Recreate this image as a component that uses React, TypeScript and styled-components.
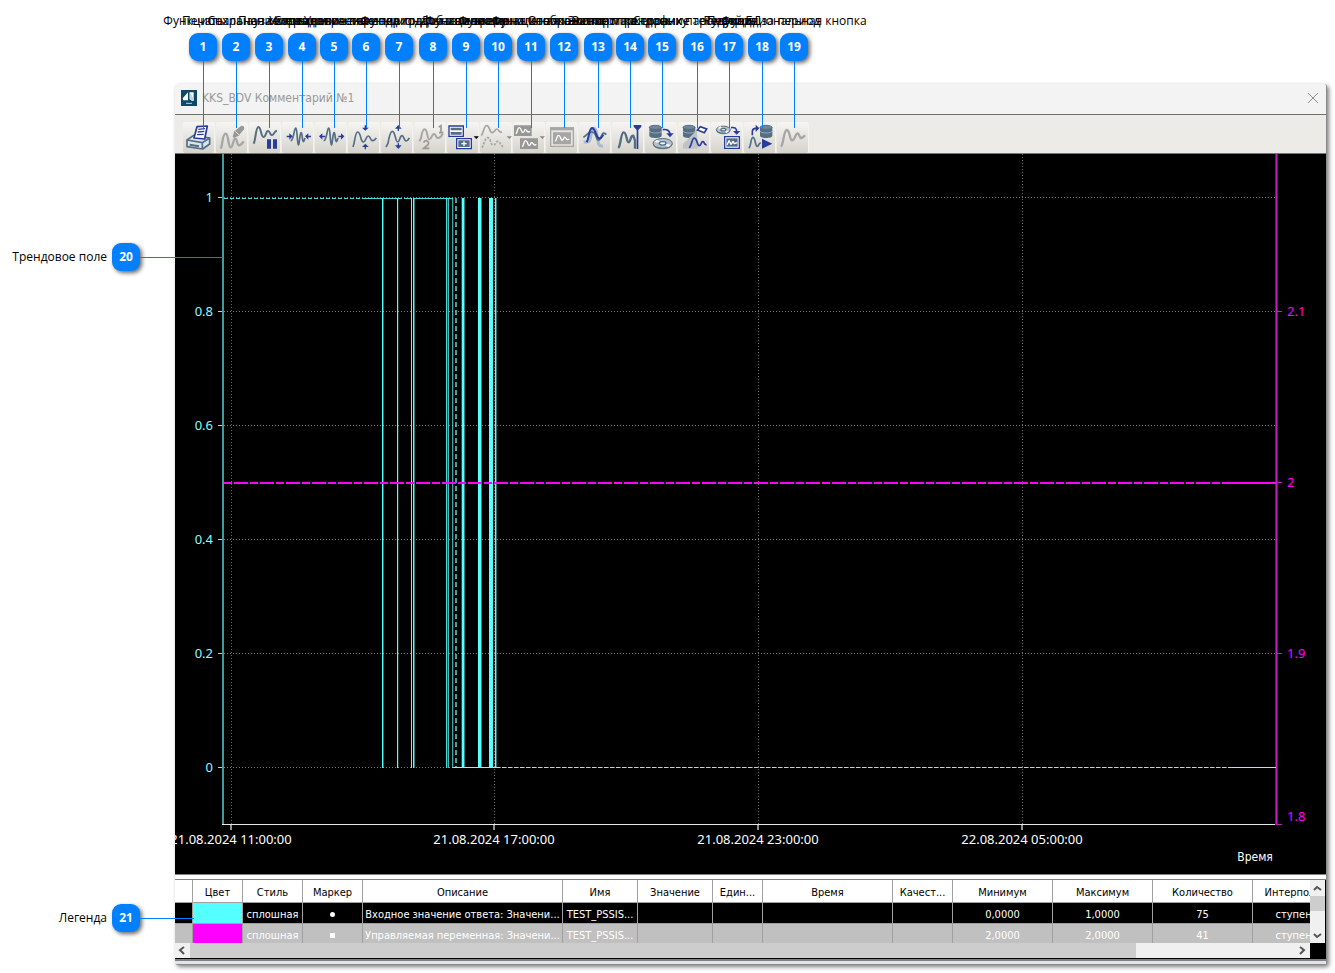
import React from "react";
import styled, { createGlobalStyle } from "styled-components";

const UI = `"DejaVu Sans Condensed", "DejaVu Sans", sans-serif`;
const SLATE = "#546e84";
const BLUE = "#283c9b";
const GRAY = "#a6a6a4";
const ACCENT = "#0080ff";

const GlobalStyle = createGlobalStyle`
  * { box-sizing: border-box; }
  body { margin: 0; background: #fff; }
`;

const Page = styled.main`
  position: relative;
  padding: 84px 8px 8px 175px;
  overflow: hidden;
`;

const Window = styled.section`
  display: flex;
  flex-direction: column;
  border-right: 1px solid #8a8a8a;
  border-bottom: 1px solid #8a8a8a;
  border-radius: 3px;
  background: #fff;
  box-shadow: 2px 2px 4px rgba(0, 0, 0, 0.5);
`;

const TitleBar = styled.header`
  display: flex;
  align-items: center;
  gap: 5px;
  height: 31px;
  padding: 0 7px 2px 6px;
  border-bottom: 1px solid #6e706c;
  border-radius: 3px 3px 0 0;
  background: #f3f3f3;
  font: 12px/16px ${UI};
  color: #999;
`;

const Title = styled.h1`
  flex: 1;
  margin: 0;
  font: inherit;
`;

const CloseButton = styled.button`
  display: grid;
  place-items: center;
  width: 12px;
  height: 12px;
  padding: 0;
  border: 0;
  background: none;
`;

const Toolbar = styled.div`
  display: flex;
  gap: 1px;
  height: 39px;
  padding: 7px 8px 0;
  border-bottom: 1px solid #777;
  background: #ecebe7;
`;

const ToolButton = styled.button`
  width: 32px;
  height: 31px;
  padding: 0;
  border: 0;
  border-right: 1px solid #f4f3f0;
  border-radius: 2px;
  background: linear-gradient(#f6f5f2, #e6e4df 50%, #d6d3cb);
  svg { display: block; }
`;

const Chart = styled.svg`
  display: block;
  width: 100%;
  height: auto;
  background: #000;
  font: 13px "Noto Sans", sans-serif;
`;

const AxisTitle = styled.text`
  font: 12px ${UI};
`;

const Legend = styled.div`
  margin-top: 4px;
  padding-bottom: 1px;
  border-top: 1px solid #808080;
  border-bottom: 2px solid #808080;
  background: #000;
`;

const LegendBody = styled.div`
  display: flex;
  height: 63px;
  padding-right: 1px;
`;

const TableView = styled.div`
  flex: 1;
  min-width: 0;
  overflow: hidden;
`;

const Table = styled.table`
  width: 1178px;
  min-width: 100%;
  table-layout: fixed;
  border-collapse: separate;
  border-spacing: 0;
  font: 11px/14px ${UI};
`;

const Col = styled.col<{ $w: number }>`
  width: ${(p) => p.$w}px;
`;

const Head = styled.th`
  height: 23px;
  padding: 3px 2px 0;
  border-right: 1px solid #a0a0a0;
  border-bottom: 1px solid #a0a0a0;
  overflow: hidden;
  background: #fff;
  font-weight: 400;
  color: #000;
  white-space: nowrap;
`;

const Row = styled.tr<{ $muted?: boolean }>`
  background: ${(p) => (p.$muted ? "#c0c0c0" : "#000")};
  color: #fff;
`;

const Cell = styled.td<{ $fill?: string }>`
  height: 21px;
  padding: 3px 2px 0;
  border-right: 1px solid #a0a0a0;
  border-bottom: 1px solid #a0a0a0;
  overflow: hidden;
  background: ${(p) => p.$fill ?? "transparent"};
  text-align: center;
  white-space: nowrap;
`;

const Marker = styled.span<{ $round?: boolean }>`
  display: inline-block;
  width: 5px;
  height: 5px;
  vertical-align: middle;
  border-radius: ${(p) => (p.$round ? "3px" : "0")};
  background: #fff;
`;

const VScroll = styled.div`
  display: flex;
  flex-direction: column;
  width: 15px;
  background: #f0f0f0;
`;

const HScroll = styled.div`
  display: flex;
  height: 15px;
  margin-right: 16px;
  background: #f0f0f0;
`;

const ScrollButton = styled.button`
  display: grid;
  place-items: center;
  width: 15px;
  height: 16px;
  padding: 0;
  border: 0;
  background: #f0f0f0;
`;

const HScrollButton = styled(ScrollButton)`
  height: 15px;
`;

const VThumb = styled.div`
  height: 15px;
  margin-bottom: auto;
  background: #cdcdcd;
`;

const HThumb = styled.div`
  flex: 947;
  background: #cdcdcd;
`;

const HTrack = styled.div`
  flex: 159;
`;

const StatusStrip = styled.div`
  height: 3px;
  background: #e1e4e9;
`;

const TopCallout = styled.div<{ $x: number }>`
  position: absolute;
  left: ${(p) => p.$x}px;
  top: 13px;
  display: flex;
  flex-direction: column;
  align-items: center;
  width: 0;
  font: 12px/16px "Open Sans", sans-serif;
  color: #000;
  white-space: nowrap;
`;

const SideCallout = styled.div<{ $y: number }>`
  position: absolute;
  left: 0;
  top: ${(p) => p.$y}px;
  display: flex;
  align-items: center;
  font: 12px/16px "Open Sans", sans-serif;
  color: #000;
  white-space: nowrap;
`;

const SideLabel = styled.span`
  width: 112px;
  padding-right: 5px;
  text-align: right;
`;

const Badge = styled.b`
  flex: none;
  display: grid;
  place-items: center;
  width: 28px;
  height: 28px;
  border-radius: 9px;
  background: ${ACCENT};
  box-shadow: 2px 2px 4px rgba(0, 0, 0, 0.6);
  font: 700 12px/16px "Open Sans", sans-serif;
  color: #fff;
`;

const TopBadge = styled(Badge)`
  margin-top: 4px;
`;

/* The one-pixel margins keep the centred hairlines on whole pixels. */
const VLine = styled.i`
  width: 1px;
  height: 67px;
  margin-left: 1px;
  background: ${ACCENT};
`;

const HLine = styled.i<{ $w: number }>`
  width: ${(p) => p.$w}px;
  height: 1px;
  margin-top: 1px;
  background: ${ACCENT};
`;

/* Toolbar icons are drawn on a 96 x 93 grid, three units to a pixel. */
const Wave = ({ d, c = SLATE, w = 6, dash }: { d: string; c?: string; w?: number; dash?: string }) => (
  <path d={d} fill="none" stroke={c} strokeWidth={w} strokeLinejoin="round" strokeDasharray={dash} />
);
const Fill = ({ d, c = BLUE }: { d: string; c?: string }) => <path d={d} fill={c} />;

const TREND = "M15 75L21 64Q27 28 34 28C43 28 43 60 50 60C57 60 56 41 63 41C69 41 69 57 75 57Q80 57 85 48";
const BURST = "M26 56C32 56 33 44 36 34C40 12 43 13 45 36C48 78 50 76 53 50C56 26 59 26 61 48C64 66 66 58 69 48";
const CARET = "M80 43H96L88 51Z";
const MINI = "M0 19C5 14 4 0 10 1C17 2 15 16 21 15C27 14 24 5 29 7C34 8 32 18 42 12";
const disc = (x: number, y: number, rx: number) => (
  <g transform={`translate(${x} ${y})`}>
    <ellipse cy="3" rx={rx} ry={rx * 0.52} fill="#6c8190" />
    <ellipse rx={rx} ry={rx * 0.5} fill="#b3c1ca" stroke={SLATE} strokeWidth="3" />
    <path d={`M${-rx + 4} -4L0 0L${-rx + 12} -11Z M${rx - 4} 4L0 0L${rx - 12} 11Z`} fill="#f4f7f8" />
    <ellipse rx={rx * 0.35} ry={rx * 0.18} fill="#f4f4f2" stroke={SLATE} strokeWidth="4" />
  </g>
);
const cylinder = (x: number, y: number) => (
  <g transform={`translate(${x} ${y})`}>
    <path d="M0 6V31C0 40 37 40 37 31V6Z" fill={SLATE} />
    <ellipse cx="18" cy="6" rx="18" ry="6" fill="#71889a" stroke={SLATE} strokeWidth="3" />
    <path d="M0 17C2 25 35 25 37 17" fill="none" stroke="#b5c2cb" strokeWidth="2" />
  </g>
);

const ICONS: [string, React.ReactNode][] = [
  ["Печать", <>
    <path d="M12 54L32 40L80 48V66L59 81L12 74Z" fill="#dce4e9" stroke={SLATE} strokeWidth="5" strokeLinejoin="round" />
    <path d="M12 54L58 62L80 48M58 62V80" fill="none" stroke={SLATE} strokeWidth="5" />
    <path d="M42 14L73 12L65 51L33 48Z" fill="#fff" stroke={BLUE} strokeWidth="5" strokeLinejoin="round" />
    <path d="M46 22L66 20M44 30L64 28M42 38L62 37" stroke={BLUE} strokeWidth="4" />
    <path d="M20 68L48 73" stroke={SLATE} strokeWidth="6" />
  </>],
  ["Редактирование", <>
    <Wave c={GRAY} w={7} d="M14 80C20 70 19 35 29 35C38 35 36 76 44 76C52 76 51 50 58 50C64 50 62 70 69 70Q76 69 83 58" />
    <path d="M50 44L55 28L76 11Q87 12 84 22L68 41L54 48Z" fill="#989896" />
    <path d="M57 27L69 39" stroke="#ddd" strokeWidth="3" />
  </>],
  ["Пауза", <>
    <Wave d="M14 65C20 55 20 16 28 15C37 15 35 46 44 45C52 44 50 27 57 27C64 27 62 40 69 39C77 38 75 26 84 26" />
    <Fill d="M54 52H66V80H54ZM72 52H84V80H72Z" />
  </>],
  ["Сжать по времени", <>
    <Wave d={BURST} w={5} />
    <Fill d="M14 41H22V34L32 43L22 53V46H14ZM87 41H79V34L69 43L79 53V46H87Z" />
  </>],
  ["Растянуть по времени", <>
    <Wave d={BURST} w={5} />
    <Fill d="M30 41H22V34L12 43L22 53V46H30ZM70 41H78V34L88 43L78 53V46H70Z" />
  </>],
  ["Сжать по вертикали", <>
    <Wave w={5} d="M15 75C21 61 21 30 29 30C39 30 37 61 46 60C54 59 54 42 61 42C68 42 66 57 74 56Q79 56 85 48" />
    <Fill d="M50 10H54V17H62L52 26L42 17H50ZM50 82H54V75H62L52 65L42 75H50Z" />
  </>],
  ["Растянуть по вертикали", <>
    <Wave d={TREND} w={5} />
    <Fill d="M50 27H54V20H62L52 9L42 20H50ZM50 64H54V70H62L52 81L42 70H50Z" />
  </>],
  ["Первый и второй тренд", <>
    <Wave c={GRAY} d="M16 58L21 49Q25 22 32 22C41 22 39 53 46 52C54 51 53 36 60 36C67 36 65 50 73 48Q81 47 86 35" />
    <path d="M74 15L81 11V32M75 32H88M29 62Q31 55 38 56Q47 60 42 68L29 79H46" fill="none" stroke="#999" strokeWidth="5" />
  </>],
  ["Список параметров", <>
    <path d="M6 12H49V43H6ZM29 50H73V80H29Z" fill="#fff" stroke={BLUE} strokeWidth="4" />
    <Fill c={SLATE} d="M11 17H44V25H11ZM11 30H44V38H11ZM34 55H68V75H34Z" />
    <path d="M43 65H59M51 58V72" stroke="#fff" strokeWidth="4" />
    <Fill c="#000" d={CARET} />
  </>],
  ["Тренды", <>
    <Wave c={GRAY} w={5} d="M4 41C11 33 11 11 20 11C30 11 28 33 37 32C45 31 45 20 51 21C58 22 55 34 66 30" />
    <Wave c={GRAY} w={5} dash="7 4" d="M6 77C12 68 15 47 23 47C33 48 31 70 40 69C48 68 47 57 54 58C61 59 60 72 73 75" />
    <Fill c="#888" d={CARET} />
  </>],
  ["Области трендов", <>
    <Fill c="#979796" d="M3 10H56V42H3ZM21 49H75V81H21Z" />
    <g transform="translate(9 16)"><Wave c="#fff" w={4} d={MINI} /></g>
    <g transform="translate(28 55)"><Wave c="#fff" w={4} d={MINI} /></g>
    <Fill c="#888" d={CARET} />
  </>],
  ["Окно", <>
    <path d="M14 18H82V73H14Z" fill="#e5e4e1" stroke={GRAY} strokeWidth="4" />
    <Fill c={GRAY} d="M12 16H84V25H12ZM21 31H75V67H21Z" />
    <g transform="translate(28 39)"><Wave c="#fff" w={4} d={MINI} /></g>
  </>],
  ["Сравнение", <>
    <Wave c="#a9b9cf" w={9} d="M14 60C26 58 31 68 36 40C39 12 50 12 54 38C58 66 58 74 72 72" />
    <Wave c={SLATE} w={5} d="M13 46C22 42 26 30 38 30C50 30 50 44 55 52C62 60 66 44 70 36Q74 30 82 38" />
    <Wave c={BLUE} d="M23 61C30 49 30 19 39 18C49 18 50 43 58 48Q66 52 73 38" />
  </>],
  ["Линейка", <>
    <Wave w={7} d="M19 78C27 70 26 31 35 31C45 31 43 62 50 61C57 60 54 40 64 41L69 56V80" />
    <Fill d="M65 9H88V14L79 24V81H74V24L65 14Z" />
  </>],
  ["Архив", <>
    {cylinder(13, 10)}
    <path d="M53 23Q75 20 75 39" fill="none" stroke={BLUE} strokeWidth="5" />
    <Fill d="M64 34H86L75 46Z" />
    {disc(53, 64, 29)}
  </>],
  ["Очистить", <>
    {cylinder(15, 10)}
    <Fill c="#bfc3c8" d="M15 80V66L57 24L59 80Z" />
    <path d="M58 24L67 14L86 21L79 32Z" fill="#fff" stroke={BLUE} strokeWidth="5" />
    <Wave c={BLUE} w={5} d="M34 78C42 67 42 47 49 48C58 49 57 72 64 71C71 70 68 58 75 59C80 60 78 70 86 68" />
  </>],
  ["Показать архив", <>
    {disc(37, 23, 21)}
    <path d="M60 17Q77 14 77 29" fill="none" stroke={BLUE} strokeWidth="5" />
    <Fill d="M66 27H88L77 38Z" />
    <path d="M41 44H85V79H41Z" fill="#fff" stroke={BLUE} strokeWidth="4" />
    <Fill c={SLATE} d="M46 49H80V74H46Z" />
    <Wave c="#fff" w={4} d="M48 69L54 56L60 67L66 58L70 65L79 62" />
  </>],
  ["Воспроизвести", <>
    {cylinder(48, 10)}
    <Wave w={5} d="M15 79C22 70 20 46 27 46C35 47 33 74 40 73C46 72 43 62 51 63" />
    <path d="M25 40V29Q25 19 36 19" fill="none" stroke={BLUE} strokeWidth="5" />
    <Fill d="M35 8V30L46 19ZM54 50V80L85 65Z" />
  </>],
  ["Тренд", <Wave key="w" c={GRAY} w={7} d="M12 74C20 66 20 25 29 24C40 24 37 56 46 55C54 54 55 34 62 34C69 35 66 50 74 48Q78 47 84 40" />],
];

const FN = "Функциональная кнопка";
const CALLOUTS: [number, string][] = [
  [203, "Печать"],
  [236, FN],
  [269, "Сохранение трендов"],
  [302, "Пауза и продолжение"],
  [334, "Уменьшение периода"],
  [366, "Увеличение периода"],
  [399, "Сжатие и растяжение графика по времени"],
  [433, FN],
  [466, "Добавление тр."],
  [498, FN],
  [531, FN],
  [564, FN],
  [598, "Отображение маркеров"],
  [630, "Экспорт по графику"],
  [662, "Экспорт трендовых параметров"],
  [697, "Стирание текущей БД"],
  [729, "Период"],
  [762, "Редукция за период"],
  [794, FN],
];

const COLS = [18, 50, 60, 60, 200, 75, 75, 50, 130, 60, 100, 100, 100, 100];
const HEADS = ["", "Цвет", "Стиль", "Маркер", "Описание", "Имя", "Значение", "Един...", "Время", "Качест...", "Минимум", "Максимум", "Количество", "Интерполяция"];
const ROWS = [
  { color: "#55ffff", desc: "Входное значение ответа: Значени...", min: "0,0000", max: "1,0000", count: "75" },
  { color: "#ff00ff", desc: "Управляемая переменная: Значени...", min: "2,0000", max: "2,0000", count: "41" },
];

/* [x, width, opacity] of every vertical edge of the discrete signal. */
const EDGES: [number, number, number][] = [
  [207, 1, 1], [208, 1, 0.45], [222, 1, 1], [223, 1, 0.2], [236, 1, 1], [238, 1, 1], [239, 1, 0.5],
  [271, 1, 0.85], [272, 1, 0.3], [273, 1, 0.75], [277, 1, 0.65], [278, 1, 0.2], [286, 1, 0.3],
  [287, 2, 1], [289, 1, 0.5], [303, 3, 1], [306, 1, 0.5], [314, 4, 1], [320, 1, 1], [321, 1, 0.45],
];

const TrendChart = () => (
  <Chart viewBox="0 0 1151 721" role="img" aria-label="Трендовое поле">
    <g shapeRendering="crispEdges">
      {[43, 157, 271, 385, 499, 613].map((y) => (
        <path key={y} d={`M49 ${y}.5H1101`} stroke="#808080" strokeDasharray="1 2" />
      ))}
      {[56, 319, 583, 847].map((x) => (
        <g key={x}>
          <path d={`M${x}.5 0V670`} stroke="#686868" strokeDasharray="1 2" />
          <path d={`M${x} 671V676`} stroke="#909090" strokeWidth="2" />
        </g>
      ))}
      {[43, 157, 271, 385, 499, 613].map((y) => (
        <path key={y} d={`M43 ${y}.5H48`} stroke="#55ffff" />
      ))}
      <path d="M48 0V670" stroke="#3f9c9c" strokeWidth="2" />
      <path d="M47 670.5H1101" stroke="#e8e8e8" />
      <path d="M1101.5 0V671" stroke="#6e146e" strokeWidth="3" />
      <path d="M1101.5 0V671M1101 157.5H1107M1101 328.5H1107M1101 499.5H1107M1101 670.5H1107" stroke="#c020c0" />
      <path d="M49 44.5H189" stroke="#48d8d8" strokeDasharray="4 2" />
      <path d="M189 44.5H227M229 44.5H237M238 44.5H278" stroke="#48d8d8" />
      {EDGES.map(([x, w, o]) => (
        <rect key={x} x={x} y="44" width={w} height="570" fill="#55ffff" opacity={o} />
      ))}
      <path d="M281 44V613" stroke="#48d0d0" strokeWidth="2" strokeDasharray="5 3" opacity="0.8" />
      <path d="M278 613.5H321M1057 613.5H1101" stroke="#7ff" />
      <path d="M321 613.5H1057" stroke="#a8dede" strokeDasharray="4 2" />
      <path d="M49 329H1057" stroke="#f0f" strokeWidth="2" strokeDasharray="8 2 14 2" />
      <path d="M1050 329H1101" stroke="#f0f" strokeWidth="2" />
    </g>
    <g fill="#8ff" textAnchor="end">
      {["1", "0.8", "0.6", "0.4", "0.2", "0"].map((t, i) => (
        <text key={t} x="38" y={48 + i * 114}>{t}</text>
      ))}
    </g>
    <g fill="#f0f">
      <text x="1112" y="162">2.1</text>
      <text x="1112" y="333">2</text>
      <text x="1112" y="504">1.9</text>
      <text x="1112" y="667">1.8</text>
    </g>
    <g fill="#fff" textAnchor="middle">
      <text x="56" y="690">21.08.2024 11:00:00</text>
      <text x="319" y="690">21.08.2024 17:00:00</text>
      <text x="583" y="690">21.08.2024 23:00:00</text>
      <text x="847" y="690">22.08.2024 05:00:00</text>
      <AxisTitle x="1080" y="707">Время</AxisTitle>
    </g>
    <path d="M0 720.5H1151" stroke="#808080" />
  </Chart>
);

const Arrow = ({ d }: { d: string }) => (
  <svg width="9" height="9" viewBox="0 0 9 9" aria-hidden="true">
    <path d={d} fill="none" stroke="#555" strokeWidth="2" />
  </svg>
);

export default function App() {
  return (
    <Page>
      <GlobalStyle />
      <Window>
        <TitleBar>
          <svg width="16" height="16" viewBox="0 0 48 48" aria-hidden="true">
            <path d="M0 0H48V48H0Z" fill="#0c4a68" />
            <path d="M5 25L21 7V31H7ZM26 7H38V32H33L26 28Z" fill="#fff" />
            <path d="M26 7L38 26V32H33L26 28Z" fill="#c4d6df" />
            <path d="M15 40H33" stroke="#b9d0dc" strokeWidth="3" />
          </svg>
          <Title>KKS_BDV Комментарий №1</Title>
          <CloseButton aria-label="Закрыть">
            <svg width="12" height="12" viewBox="0 0 12 12"><path d="M1 1L11 11M11 1L1 11" stroke="#8c8c8c" /></svg>
          </CloseButton>
        </TitleBar>
        <Toolbar role="toolbar">
          {ICONS.map(([name, art]) => (
            <ToolButton key={name} aria-label={name}>
              <svg width="32" height="31" viewBox="0 0 96 93">{art}</svg>
            </ToolButton>
          ))}
        </Toolbar>
        <TrendChart />
        <Legend>
          <LegendBody>
            <TableView>
              <Table>
                <colgroup>{COLS.map((w, i) => <Col key={i} $w={w} />)}</colgroup>
                <thead>
                  <tr>{HEADS.map((h, i) => <Head key={i}>{h}</Head>)}</tr>
                </thead>
                <tbody>
                  {ROWS.map((r, i) => (
                    <Row key={r.color} $muted={i === 1}>
                      <Cell />
                      <Cell $fill={r.color} />
                      <Cell>сплошная</Cell>
                      <Cell><Marker $round={i === 0} /></Cell>
                      <Cell>{r.desc}</Cell>
                      <Cell>TEST_PSSIS...</Cell>
                      <Cell />
                      <Cell />
                      <Cell />
                      <Cell />
                      <Cell>{r.min}</Cell>
                      <Cell>{r.max}</Cell>
                      <Cell>{r.count}</Cell>
                      <Cell>ступенька</Cell>
                    </Row>
                  ))}
                </tbody>
              </Table>
            </TableView>
            <VScroll>
              <ScrollButton aria-label="Вверх"><Arrow d="M1 6L4 3L8 6" /></ScrollButton>
              <VThumb />
              <ScrollButton aria-label="Вниз"><Arrow d="M1 3L4 6L8 3" /></ScrollButton>
            </VScroll>
          </LegendBody>
          <HScroll>
            <HScrollButton aria-label="Влево"><Arrow d="M6 1L2 4L6 8" /></HScrollButton>
            <HThumb />
            <HTrack />
            <HScrollButton aria-label="Вправо"><Arrow d="M2 1L6 4L2 8" /></HScrollButton>
          </HScroll>
        </Legend>
        <StatusStrip />
      </Window>
      {CALLOUTS.map(([x, text], i) => (
        <TopCallout key={x} $x={x}>
          <span>{text}</span>
          <TopBadge>{i + 1}</TopBadge>
          <VLine />
        </TopCallout>
      ))}
      <SideCallout $y={243}>
        <SideLabel>Трендовое поле</SideLabel>
        <Badge>20</Badge>
        <HLine $w={83} />
      </SideCallout>
      <SideCallout $y={904}>
        <SideLabel>Легенда</SideLabel>
        <Badge>21</Badge>
        <HLine $w={54} />
      </SideCallout>
    </Page>
  );
}
